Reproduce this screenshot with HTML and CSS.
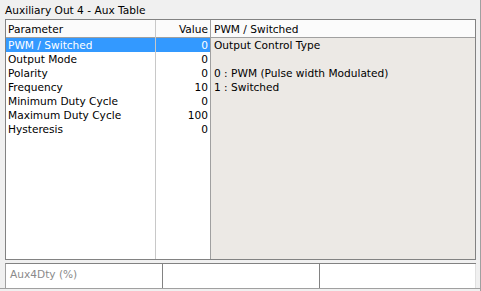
FILE: index.html
```html
<!DOCTYPE html>
<html>
<head>
<meta charset="utf-8">
<link rel="stylesheet" href="styles.css">
</head>
<body>
<div class="window">
  <div class="title">Auxiliary Out 4 - Aux Table</div>
  <div class="table">
    <div class="grid">
      <div class="col col-param">
        <div class="hdr">Parameter</div>
        <div class="rows">
          <div class="row sel">PWM / Switched</div>
          <div class="row">Output Mode</div>
          <div class="row">Polarity</div>
          <div class="row">Frequency</div>
          <div class="row">Minimum Duty Cycle</div>
          <div class="row">Maximum Duty Cycle</div>
          <div class="row">Hysteresis</div>
        </div>
      </div>
      <div class="col col-value">
        <div class="hdr num">Value</div>
        <div class="rows">
          <div class="row num sel">0</div>
          <div class="row num">0</div>
          <div class="row num">0</div>
          <div class="row num">10</div>
          <div class="row num">0</div>
          <div class="row num">100</div>
          <div class="row num">0</div>
        </div>
      </div>
      <div class="col col-desc">
        <div class="hdr">PWM / Switched</div>
        <div class="desc">
          <div class="line">Output Control Type</div>
          <div class="line">&nbsp;</div>
          <div class="line">0 : PWM (Pulse width Modulated)</div>
          <div class="line">1 : Switched</div>
        </div>
      </div>
    </div>
  </div>
  <div class="status">
    <div class="pane muted">Aux4Dty (%)</div>
    <div class="pane"></div>
    <div class="pane"></div>
  </div>
  <div class="foot"></div>
</div>
</body>
</html>
```
FILE: styles.css
```css
html, body {
  margin: 0;
  padding: 0;
}
body {
  width: 481px;
  height: 291px;
  background: #f0f0f0;
  font-family: "DejaVu Sans", Verdana, sans-serif;
  font-size: 10.6px;
  color: #000;
  overflow: hidden;
}
.window {
  display: flex;
  flex-direction: column;
  height: 291px;
  border-right: 1px solid #a0a0a0;
  box-sizing: border-box;
}
.title {
  height: 19px;
  line-height: 20px;
  padding-left: 5px;
}
.table {
  margin: 0 4px 0 5px;
  height: 241px;
  border: 1px solid #828282;
  box-sizing: border-box;
  background: #fff;
}
.grid {
  display: grid;
  grid-template-columns: 150px 55px 1fr;
  height: 100%;
}
.col {
  display: flex;
  flex-direction: column;
}
.col-param {
  border-right: 1px solid #c8c8c8;
}
.col-value {
  border-right: 1px solid #a0a0a0;
}
.hdr {
  height: 18px;
  line-height: 18px;
  padding: 0 2px;
  border-bottom: 1px solid #a0a0a0;
  background: #fbfbfb;
  box-sizing: border-box;
}
.col-desc .hdr {
  padding-left: 3px;
}
.rows {
  flex: 1;
}
.row {
  height: 14px;
  line-height: 14px;
  padding: 0 2px;
}
.num {
  text-align: right;
}
.sel {
  background: #3399ff;
  color: #fff;
}
.col-desc .desc {
  flex: 1;
  background: #ece9e5;
  padding: 0 3px;
}
.line {
  height: 14px;
  line-height: 14px;
}
.status {
  margin: 3px 4px 0 5px;
  height: 25px;
  display: grid;
  grid-template-columns: 157px 157px 1fr;
  background: #fff;
  border-top: 1px solid #828282;
  border-left: 1px solid #a0a0a0;
  box-sizing: border-box;
}
.pane {
  border-right: 1px solid #828282;
  padding: 3px 4px 0;
  line-height: 14px;
}
.pane:last-child {
  border-right: 1px solid #e0e0e0;
}
.muted {
  color: #8a8a8a;
}
.foot {
  height: 1px;
  background: #a0a0a0;
}
```
